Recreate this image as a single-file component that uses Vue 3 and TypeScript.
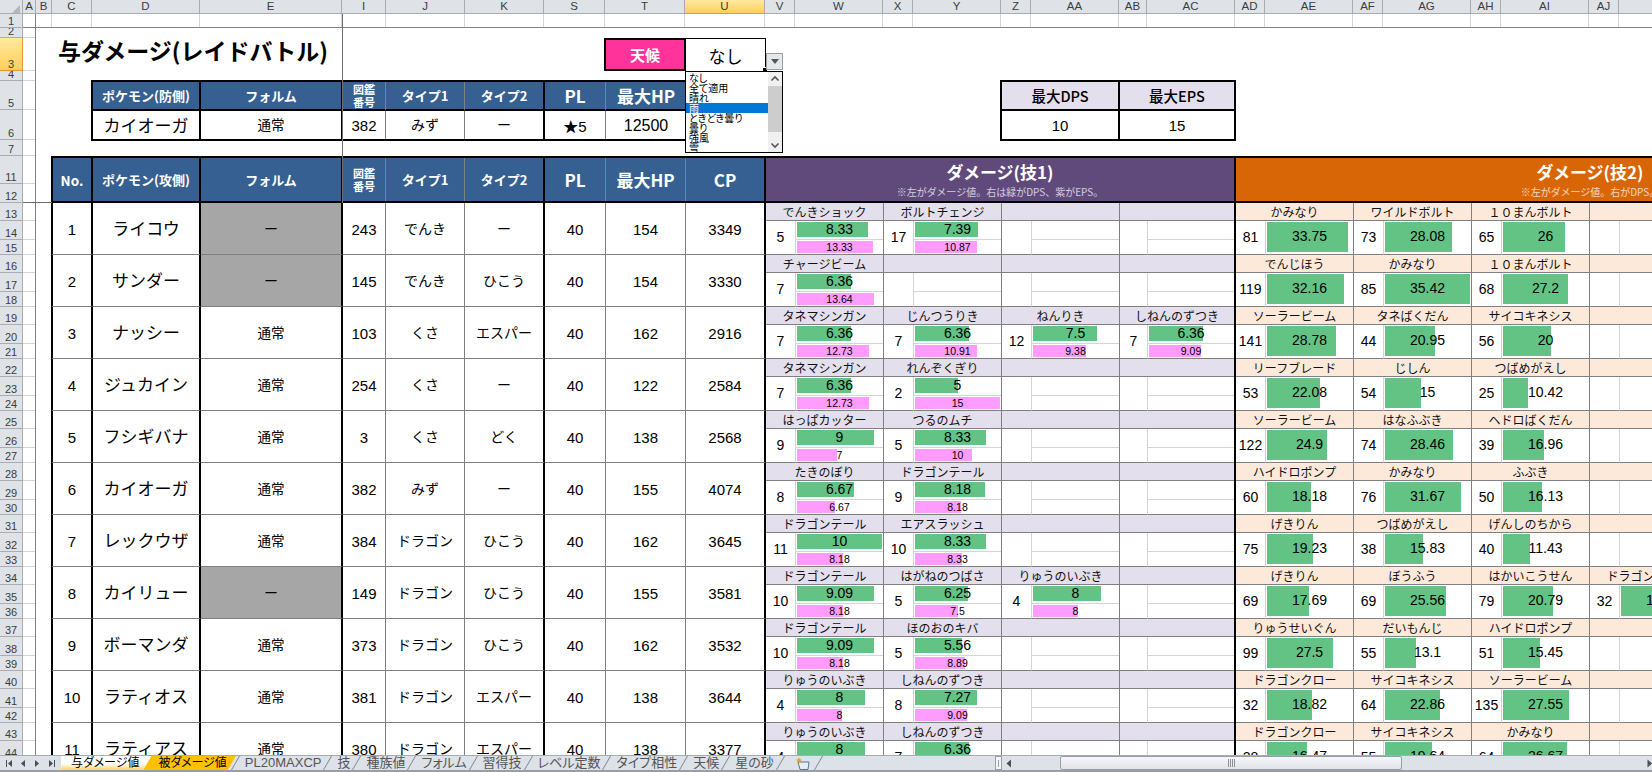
<script setup lang="ts">
interface FastMove {
  name: string
  hit: number
  dps: number
  eps: number
}

interface ChargeMove {
  name: string
  hit: number
  dps: number
}

interface Attacker {
  no: number
  name: string
  form: string
  dex: number
  type1: string
  type2: string
  hp: number
  cp: number
  fast: FastMove[]
  charge: ChargeMove[]
}

const f = (name: string, hit: number, dps: number, eps: number): FastMove => ({ name, hit, dps, eps })
const c = (name: string, hit: number, dps: number): ChargeMove => ({ name, hit, dps })

const attackers: Attacker[] = [
  {
    no: 1, name: 'ライコウ', form: 'ー', dex: 243, type1: 'でんき', type2: 'ー', hp: 154, cp: 3349,
    fast: [f('でんきショック', 5, 8.33, 13.33), f('ボルトチェンジ', 17, 7.39, 10.87)],
    charge: [c('かみなり', 81, 33.75), c('ワイルドボルト', 73, 28.08), c('１０まんボルト', 65, 26)],
  },
  {
    no: 2, name: 'サンダー', form: 'ー', dex: 145, type1: 'でんき', type2: 'ひこう', hp: 154, cp: 3330,
    fast: [f('チャージビーム', 7, 6.36, 13.64)],
    charge: [c('でんじほう', 119, 32.16), c('かみなり', 85, 35.42), c('１０まんボルト', 68, 27.2)],
  },
  {
    no: 3, name: 'ナッシー', form: '通常', dex: 103, type1: 'くさ', type2: 'エスパー', hp: 162, cp: 2916,
    fast: [
      f('タネマシンガン', 7, 6.36, 12.73),
      f('じんつうりき', 7, 6.36, 10.91),
      f('ねんりき', 12, 7.5, 9.38),
      f('しねんのずつき', 7, 6.36, 9.09),
    ],
    charge: [c('ソーラービーム', 141, 28.78), c('タネばくだん', 44, 20.95), c('サイコキネシス', 56, 20)],
  },
  {
    no: 4, name: 'ジュカイン', form: '通常', dex: 254, type1: 'くさ', type2: 'ー', hp: 122, cp: 2584,
    fast: [f('タネマシンガン', 7, 6.36, 12.73), f('れんぞくぎり', 2, 5, 15)],
    charge: [c('リーフブレード', 53, 22.08), c('じしん', 54, 15), c('つばめがえし', 25, 10.42)],
  },
  {
    no: 5, name: 'フシギバナ', form: '通常', dex: 3, type1: 'くさ', type2: 'どく', hp: 138, cp: 2568,
    fast: [f('はっぱカッター', 9, 9, 7), f('つるのムチ', 5, 8.33, 10)],
    charge: [c('ソーラービーム', 122, 24.9), c('はなふぶき', 74, 28.46), c('ヘドロばくだん', 39, 16.96)],
  },
  {
    no: 6, name: 'カイオーガ', form: '通常', dex: 382, type1: 'みず', type2: 'ー', hp: 155, cp: 4074,
    fast: [f('たきのぼり', 8, 6.67, 6.67), f('ドラゴンテール', 9, 8.18, 8.18)],
    charge: [c('ハイドロポンプ', 60, 18.18), c('かみなり', 76, 31.67), c('ふぶき', 50, 16.13)],
  },
  {
    no: 7, name: 'レックウザ', form: '通常', dex: 384, type1: 'ドラゴン', type2: 'ひこう', hp: 162, cp: 3645,
    fast: [f('ドラゴンテール', 11, 10, 8.18), f('エアスラッシュ', 10, 8.33, 8.33)],
    charge: [c('げきりん', 75, 19.23), c('つばめがえし', 38, 15.83), c('げんしのちから', 40, 11.43)],
  },
  {
    no: 8, name: 'カイリュー', form: 'ー', dex: 149, type1: 'ドラゴン', type2: 'ひこう', hp: 155, cp: 3581,
    fast: [f('ドラゴンテール', 10, 9.09, 8.18), f('はがねのつばさ', 5, 6.25, 7.5), f('りゅうのいぶき', 4, 8, 8)],
    charge: [
      c('げきりん', 69, 17.69),
      c('ぼうふう', 69, 25.56),
      c('はかいこうせん', 79, 20.79),
      c('ドラゴンクロー', 32, 18.82),
    ],
  },
  {
    no: 9, name: 'ボーマンダ', form: '通常', dex: 373, type1: 'ドラゴン', type2: 'ひこう', hp: 162, cp: 3532,
    fast: [f('ドラゴンテール', 10, 9.09, 8.18), f('ほのおのキバ', 5, 5.56, 8.89)],
    charge: [c('りゅうせいぐん', 99, 27.5), c('だいもんじ', 55, 13.1), c('ハイドロポンプ', 51, 15.45)],
  },
  {
    no: 10, name: 'ラティオス', form: '通常', dex: 381, type1: 'ドラゴン', type2: 'エスパー', hp: 138, cp: 3644,
    fast: [f('りゅうのいぶき', 4, 8, 8), f('しねんのずつき', 8, 7.27, 9.09)],
    charge: [c('ドラゴンクロー', 32, 18.82), c('サイコキネシス', 64, 22.86), c('ソーラービーム', 135, 27.55)],
  },
  {
    no: 11, name: 'ラティアス', form: '通常', dex: 380, type1: 'ドラゴン', type2: 'エスパー', hp: 138, cp: 3377,
    fast: [f('りゅうのいぶき', 4, 8, 8), f('しねんのずつき', 7, 6.36, 9.09)],
    charge: [c('ドラゴンクロー', 28, 16.47), c('サイコキネシス', 55, 19.64), c('かみなり', 64, 26.67)],
  },
]

const colNames = [
  'A', 'B', 'C', 'D', 'E', 'I', 'J', 'K', 'S', 'T', 'U', 'V', 'W', 'X', 'Y', 'Z',
  'AA', 'AB', 'AC', 'AD', 'AE', 'AF', 'AG', 'AH', 'AI', 'AJ', 'AK',
]

const rowHeads = [
  { no: 1, h: 14 },
  { no: 2, h: 10 },
  { no: 3, h: 33 },
  { no: 4, h: 10 },
  { no: 5, h: 29 },
  { no: 6, h: 30 },
  { no: 7, h: 16 },
  { no: 11, h: 28 },
  { no: 12, h: 19 },
]
const repeat = [18, 19, 15]
for (let no = 13; no <= 46; no++) {
  rowHeads.push({ no, h: repeat[(no - 13) % 3] })
}

const weatherOptions = ['なし', '全て適用', '晴れ', '雨', 'ときどき曇り', '曇り', '強風', '雪']

const tabs = [
  { name: '与ダメージ値', kind: 'active' },
  { name: '被ダメージ値', kind: 'gold' },
  { name: 'PL20MAXCP', kind: '' },
  { name: '技', kind: '' },
  { name: '種族値', kind: '' },
  { name: 'フォルム', kind: '' },
  { name: '習得技', kind: '' },
  { name: 'レベル定数', kind: '' },
  { name: 'タイプ相性', kind: '' },
  { name: '天候', kind: '' },
  { name: '星の砂', kind: '' },
]

// data bars share the cell width (85px) with the column max
const BAR = 85
const barWidth = (value: number, max: number) => `${(value / max) * BAR}px`

const slots = <T,>(list: T[], n: number): (T | null)[] => {
  const out: (T | null)[] = [...list]
  while (out.length < n) out.push(null)
  return out
}
</script>

<template>
  <div class="app">
    <div class="col-bar">
      <div class="corner"><i></i></div>
      <div v-for="col in colNames" :key="col" class="col-cell" :class="{ on: col === 'U' }">{{ col }}</div>
    </div>

    <div class="body">
      <div class="row-bar">
        <div
          v-for="r in rowHeads"
          :key="r.no"
          class="row-cell"
          :class="{ on: r.no === 3 }"
          :style="{ height: r.h + 'px' }"
        >{{ r.no }}</div>
      </div>
      <div class="col-a">
        <div v-for="r in rowHeads" :key="r.no" class="a-cell" :style="{ height: r.h + 'px' }"></div>
      </div>

      <div class="page">
        <div class="row-one">
          <div v-for="col in colNames.slice(1)" :key="col"></div>
        </div>

        <div class="top">
          <h1 class="title">与ダメージ(レイドバトル)</h1>
          <div class="weather-label">天候</div>
          <div class="weather-value">
            なし
            <span class="handle"></span>
            <div class="drop-btn"><i></i></div>
            <div class="listbox">
              <ul>
                <li v-for="w in weatherOptions" :key="w" :class="{ sel: w === '雨' }">{{ w }}</li>
              </ul>
              <div class="list-scroll">
                <svg width="14" height="14" viewBox="0 0 14 14"><path d="M3.5 8.5 7 5l3.5 3.5" fill="none" stroke="#555" stroke-width="1.6" /></svg>
                <div class="list-thumb"></div>
                <svg width="14" height="14" viewBox="0 0 14 14"><path d="M3.5 5.5 7 9l3.5-3.5" fill="none" stroke="#555" stroke-width="1.6" /></svg>
              </div>
            </div>
          </div>

          <div class="def-table">
            <div class="h thick name-h">ポケモン(防側)</div>
            <div class="h thick">フォルム</div>
            <div class="h thin dex-h">図鑑<br />番号</div>
            <div class="h thin">タイプ1</div>
            <div class="h thick">タイプ2</div>
            <div class="h thin big-h">PL</div>
            <div class="h big-h">最大HP</div>
            <div class="d thick name">カイオーガ</div>
            <div class="d thick form">通常</div>
            <div class="d thin num">382</div>
            <div class="d thin type">みず</div>
            <div class="d thick type">ー</div>
            <div class="d thin num">★5</div>
            <div class="d num wide">12500</div>
          </div>

          <div class="max-table">
            <div class="max-h">最大DPS</div>
            <div class="max-h">最大EPS</div>
            <div class="max-v">10</div>
            <div class="max-v">15</div>
          </div>
        </div>

        <div class="sheet-table">
          <div class="t-row t-head">
            <div class="h thick no-h">No.</div>
            <div class="h thick name-h">ポケモン(攻側)</div>
            <div class="h thick">フォルム</div>
            <div class="h thin dex-h">図鑑<br />番号</div>
            <div class="h thin">タイプ1</div>
            <div class="h thick">タイプ2</div>
            <div class="h thin big-h">PL</div>
            <div class="h thin big-h">最大HP</div>
            <div class="h thick big-h">CP</div>
            <div class="band band-fast">
              <strong>ダメージ(技1)</strong>
              <small>※左がダメージ値。右は緑がDPS、紫がEPS。</small>
            </div>
            <div class="band band-charge">
              <strong>ダメージ(技2)</strong>
              <small>※左がダメージ値。右がDPS。</small>
            </div>
          </div>

          <div v-for="a in attackers" :key="a.no" class="t-row">
            <div class="d thick num">{{ a.no }}</div>
            <div class="d thick name">{{ a.name }}</div>
            <div class="d thick form" :class="{ blank: a.form === 'ー' }">{{ a.form }}</div>
            <div class="d thin num">{{ a.dex }}</div>
            <div class="d thin type">{{ a.type1 }}</div>
            <div class="d thick type">{{ a.type2 }}</div>
            <div class="d thin num">40</div>
            <div class="d thin num">{{ a.hp }}</div>
            <div class="d thick num">{{ a.cp }}</div>

            <div class="moves fast">
              <div v-for="(m, i) in slots(a.fast, 4)" :key="i" class="move" :class="{ narrow: i === 3 }">
                <div class="m-name">{{ m?.name }}</div>
                <div class="m-hit">{{ m?.hit }}</div>
                <div class="m-vals">
                  <div class="val val-dps">
                    <span v-if="m" class="bar green" :style="{ width: barWidth(m.dps, 10) }"></span>
                    <b>{{ m?.dps }}</b>
                  </div>
                  <div class="val val-eps">
                    <span v-if="m" class="bar pink" :style="{ width: barWidth(m.eps, 15) }"></span>
                    <b>{{ m?.eps }}</b>
                  </div>
                </div>
              </div>
            </div>

            <div class="moves charge">
              <div v-for="(m, i) in slots(a.charge, 6)" :key="i" class="move">
                <div class="m-name">{{ m?.name }}</div>
                <div class="m-hit">{{ m?.hit }}</div>
                <div class="m-vals">
                  <div class="val val-full">
                    <span v-if="m" class="bar green" :style="{ width: barWidth(m.dps, 35.42) }"></span>
                    <b>{{ m?.dps }}</b>
                  </div>
                </div>
              </div>
            </div>
          </div>
        </div>
      </div>

      <div class="freeze-v"></div>
      <div class="freeze-h"></div>
    </div>

    <div class="tabbar">
      <div class="tab-nav">
        <svg width="58" height="15" viewBox="0 0 58 15" fill="#4a4f55">
          <path d="M6 4h1v7H6zM12 4v7L8 7.5z" />
          <path d="M25 4v7l-4-3.500z" />
          <path d="M35 4v7l4-3.500z" />
          <path d="M49 4v7l4-3.500zM54 4h1v7h-1z" />
        </svg>
      </div>
      <div v-for="t in tabs" :key="t.name" class="tab" :class="t.kind">{{ t.name }}</div>
      <div class="tab new-tab">
        <svg width="16" height="14" viewBox="0 0 16 14">
          <path d="M3 5h11l-1 7.500H5z" fill="#e8eef6" stroke="#5b7693" />
          <path d="M4 .5l.9 1.800 2 .3-1.400 1.400.3 2L4 5.100 2.200 6l.3-2L1 2.600l2-.3z" fill="#f0a020" />
        </svg>
      </div>
      <div class="tab-gap"></div>
      <div class="split"><i></i></div>
      <div class="hscroll">
        <svg class="arrow" width="8" height="15" viewBox="0 0 8 15"><path d="M6 3.500v8L1.500 7.500z" fill="#4a4f55" /></svg>
        <div class="thumb"><i></i></div>
        <svg class="arrow" width="6" height="15" viewBox="0 0 6 15"><path d="M1.500 3.500v8L6 7.500z" fill="#4a4f55" /></svg>
      </div>
    </div>
  </div>
</template>

<style scoped>
.app {
  --sans: "Liberation Sans", "Noto Sans CJK JP", sans-serif;
  --jp: "Noto Sans CJK JP", "Liberation Sans", sans-serif;
  --head: #dfe3e8;
  --line: #d4d4d4;
  --grid: #808080;
  width: 1652px;
  height: 772px;
  display: flex;
  flex-direction: column;
  overflow: hidden;
  background: #fff;
  font-family: var(--sans);
  color: #000;
}

/* column letters */
.col-bar {
  flex: none;
  height: 14px;
  display: grid;
  grid-template-columns:
    23px 13px 16px 40px 108px 142px 44px 79px 79px 61px 80px 80px
    30px 88px 30px 88px 30px 88px 28px 88px
    30px 88px 30px 88px 30px 88px 30px 88px;
  background: var(--head);
  border-bottom: 1px solid #a9adb3;
  box-sizing: border-box;
}
.corner {
  display: flex;
  align-items: flex-end;
  justify-content: flex-end;
  padding: 0 2px 1px 0;
  border-right: 1px solid #a9adb3;
}
.corner i {
  width: 0;
  height: 0;
  border-left: 8px solid transparent;
  border-bottom: 8px solid #b3b8bd;
}
.col-cell {
  border-right: 1px solid #a9adb3;
  font-size: 11.5px;
  line-height: 13px;
  text-align: center;
  color: #3c3c3c;
  overflow: hidden;
}
.col-cell.on {
  background: linear-gradient(#ffe9a0, #ffcf58);
  border-bottom: 1px solid #e69a2e;
  height: 14px;
  box-sizing: border-box;
}

.body {
  position: relative;
  flex: 1;
  min-height: 0;
  display: flex;
  overflow: hidden;
}

/* row numbers */
.row-bar {
  flex: none;
  width: 23px;
  background: var(--head);
}
.row-cell {
  box-sizing: border-box;
  border-right: 1px solid #a9adb3;
  border-bottom: 1px solid #a9adb3;
  display: flex;
  align-items: flex-end;
  justify-content: center;
  font-size: 11px;
  line-height: 11px;
  color: #3c3c3c;
  overflow: hidden;
}
.row-cell.on {
  background: linear-gradient(#ffe9a0, #ffcf58);
  border-right-color: #e69a2e;
  border-bottom-color: #e69a2e;
}

.col-a {
  flex: none;
  width: 13px;
  border-right: 1px solid var(--grid);
  box-sizing: border-box;
}
.a-cell {
  box-sizing: border-box;
  border-bottom: 1px solid var(--line);
}
.a-cell:first-child {
  border-bottom-color: var(--grid);
}

.page {
  flex: none;
  width: 1616px;
  overflow: hidden;
}

.row-one {
  height: 14px;
  box-sizing: border-box;
  display: grid;
  grid-template-columns:
    16px 40px 108px 142px 44px 79px 79px 61px 80px 80px
    30px 88px 30px 88px 30px 88px 28px 88px
    30px 88px 30px 88px 30px 88px 30px 88px;
  border-bottom: 1px solid var(--grid);
}
.row-one > div {
  border-right: 1px solid var(--line);
}

/* title, weather picker and the two small tables */
.top {
  height: 128px;
  display: grid;
  grid-template-columns: 55px 513px 82px 80px 234px 236px;
  grid-template-rows: 10px 33px 9px 61px;
}
.title {
  grid-column: 1 / 3;
  grid-row: 2;
  margin: 0 0 0 22px;
  padding-bottom: 9px;
  display: flex;
  align-items: center;
  font-size: 23px;
  font-weight: 700;
  font-family: var(--jp);
  white-space: nowrap;
}
.weather-label {
  grid-column: 3;
  grid-row: 2;
  box-sizing: border-box;
  border: 2px solid #000;
  background: #ff3399;
  color: #fff;
  font-family: var(--jp);
  font-weight: 700;
  font-size: 15px;
  display: flex;
  align-items: center;
  justify-content: center;
}
.weather-value {
  grid-column: 4;
  grid-row: 2;
  position: relative;
  box-sizing: border-box;
  border-top: 1px solid #000;
  border-right: 1px solid #000;
  display: flex;
  align-items: center;
  justify-content: center;
  font-family: var(--jp);
  font-size: 17px;
}
.handle {
  position: absolute;
  right: -3px;
  bottom: -2px;
  width: 4px;
  height: 4px;
  background: #000;
  border: 1px solid #fff;
}
.drop-btn {
  position: absolute;
  left: 80px;
  top: 14px;
  width: 17px;
  height: 17px;
  box-sizing: border-box;
  border: 1px solid #9aa0a6;
  background: #e4e7eb;
  display: flex;
  align-items: center;
  justify-content: center;
}
.drop-btn i {
  width: 0;
  height: 0;
  border-left: 4px solid transparent;
  border-right: 4px solid transparent;
  border-top: 5px solid #555;
}
.listbox {
  position: absolute;
  left: -1px;
  top: 32px;
  width: 98px;
  height: 82px;
  box-sizing: border-box;
  border: 1px solid #000;
  background: #fff;
  display: flex;
  z-index: 5;
  overflow: hidden;
}
.listbox ul {
  flex: 1;
  margin: 0;
  padding: 1px 0 0;
  list-style: none;
  font-size: 10px;
  font-feature-settings: "palt";
  color: #000;
}
.listbox li {
  height: 10px;
  line-height: 10px;
  padding-left: 3px;
  white-space: nowrap;
}
.listbox li.sel {
  background: #0078d7;
  color: #fff;
}
.list-scroll {
  flex: none;
  width: 14px;
  display: flex;
  flex-direction: column;
  background: #f0f0f0;
}
.list-scroll svg {
  flex: none;
}
.list-thumb {
  height: 46px;
  margin: 0 0 auto;
  background: #cdcdcd;
}

.def-table {
  grid-column: 2 / 4;
  grid-row: 4;
  display: grid;
  grid-template-columns: 110px 142px 43px 79px 80px 61px 80px;
  grid-template-rows: 29px 28px;
  box-sizing: border-box;
  border: solid #000;
  border-width: 2px 0 2px 0;
}
.def-table > :first-child,
.def-table > :nth-child(8) {
  border-left: 2px solid #000;
}
.def-table > .h {
  border-bottom: 2px solid #000;
}
.max-table {
  grid-column: 6;
  grid-row: 4;
  display: grid;
  grid-template-columns: 118px 114px;
  grid-template-rows: 29px 28px;
  box-sizing: border-box;
  border: 2px solid #000;
}
.max-h,
.max-v {
  display: flex;
  align-items: center;
  justify-content: center;
}
.max-h {
  background: #e4dfec;
  border-bottom: 2px solid #000;
  font-family: var(--jp);
  font-weight: 500;
  font-size: 14.5px;
}
.max-v {
  font-size: 15px;
}
.max-h:nth-child(odd),
.max-v:nth-child(odd) {
  border-right: 2px solid #000;
}

/* main table */
.sheet-table {
  margin-left: 15px;
  width: 1893px;
}
.t-row {
  display: grid;
  grid-template-columns: 42px 108px 142px 43px 79px 80px 61px 80px 80px 470px 708px;
  height: 52px;
  box-sizing: border-box;
}
.t-head {
  height: 47px;
  border-top: 2px solid #000;
  border-bottom: 2px solid #000;
}
.t-row > :first-child {
  border-left: 2px solid #000;
}

.h,
.d {
  display: flex;
  align-items: center;
  justify-content: center;
  box-sizing: border-box;
  text-align: center;
  white-space: nowrap;
}
.h {
  background: #366092;
  color: #fff;
  font-family: var(--jp);
  font-weight: 700;
  font-size: 13px;
}
.d {
  background: #fff;
}
.t-row > .d {
  border-bottom: 1px solid var(--grid);
}
.thick {
  border-right: 2px solid #000;
}
.thin {
  border-right: 1px solid var(--grid);
}
.no-h {
  font-size: 13.5px;
}
.dex-h {
  font-size: 11px;
  line-height: 13px;
}
.big-h {
  font-size: 17px;
}
.name {
  font-family: var(--jp);
  font-size: 17px;
  padding-bottom: 2px;
}
.form {
  font-family: var(--jp);
  font-size: 13.5px;
  padding-bottom: 2px;
}
.form.blank {
  background: #a6a6a6;
  font-size: 14px;
}
.type {
  font-family: var(--jp);
  font-size: 14px;
  padding-bottom: 2px;
}
.num {
  font-size: 15px;
  padding-top: 1px;
}
.wide {
  font-size: 16px;
}

.band {
  box-sizing: border-box;
  color: #fff;
  font-family: var(--jp);
  display: flex;
  flex-direction: column;
  align-items: center;
  white-space: nowrap;
}
.band strong {
  font-size: 17px;
  line-height: 26px;
  margin-top: 1px;
}
.band small {
  font-size: 10px;
  line-height: 14px;
  opacity: 0.72;
}
.band-fast {
  background: #604a7b;
  border-right: 2px solid #000;
}
.band-charge {
  background: #d86607;
}

/* move blocks */
.moves {
  display: grid;
  box-sizing: border-box;
}
.fast {
  grid-template-columns: 118px 118px 118px 114px;
  border-right: 2px solid #000;
}
.charge {
  grid-template-columns: 118px 118px 118px 118px 118px 118px;
}
.move {
  display: grid;
  grid-template-columns: 30px 1fr;
  grid-template-rows: 18px 34px;
  box-sizing: border-box;
  border-right: 1px solid var(--grid);
  min-width: 0;
}
.move.narrow {
  grid-template-columns: 28px 1fr;
  border-right: 0;
}
.m-name {
  grid-column: 1 / 3;
  box-sizing: border-box;
  border-bottom: 1px solid var(--grid);
  font-family: var(--jp);
  font-size: 12px;
  line-height: 17px;
  text-align: center;
  white-space: nowrap;
  overflow: hidden;
  color: #111;
}
.fast .m-name {
  background: #e4dfec;
}
.charge .m-name {
  background: #fde9d9;
}
.m-hit {
  box-sizing: border-box;
  border-right: 1px solid var(--line);
  border-bottom: 1px solid var(--grid);
  display: flex;
  align-items: center;
  justify-content: center;
  font-size: 14px;
  padding-bottom: 1px;
}
.m-vals {
  display: flex;
  flex-direction: column;
  box-sizing: border-box;
  border-bottom: 1px solid var(--grid);
  min-width: 0;
}
.val {
  position: relative;
  text-align: center;
}
.val b {
  position: relative;
  font-weight: 400;
}
.val-dps {
  height: 19px;
  box-sizing: border-box;
  border-bottom: 1px solid var(--line);
  font-size: 14px;
  line-height: 17px;
}
.val-eps {
  flex: 1;
  font-size: 10.5px;
  line-height: 13px;
  padding-top: 1px;
}
.val-full {
  flex: 1;
  font-size: 14px;
  line-height: 31px;
}
.bar {
  position: absolute;
  left: 1px;
  top: 1px;
}
.green {
  background: #63c384;
}
.pink {
  background: #ff9cff;
}
.val-dps .bar {
  height: 15px;
}
.val-eps .bar {
  height: 11.5px;
}
.val-full .bar {
  height: 30px;
}

/* freeze pane lines */
.freeze-v {
  position: absolute;
  left: 342px;
  top: 0;
  width: 1px;
  height: 189px;
  background: #6e6e6e;
}
.freeze-h {
  position: absolute;
  left: 23px;
  top: 188px;
  width: 29px;
  height: 1px;
  background: #6e6e6e;
}

/* sheet tabs and horizontal scrollbar */
.tabbar {
  flex: none;
  height: 17px;
  box-sizing: border-box;
  display: flex;
  background: #dde1e8;
  border-top: 1px solid #a7acb2;
  border-bottom: 2px solid #9a9ea4;
  font-family: var(--sans);
  font-size: 13px;
  font-feature-settings: "palt";
  color: #555;
  overflow: hidden;
}
.tab-nav {
  flex: none;
  width: 61px;
}
.tab-nav svg {
  display: block;
}
.tab {
  position: relative;
  flex: none;
  padding: 0 7px 0 13px;
  margin-left: -4px;
  line-height: 14px;
  white-space: nowrap;
}
.tab::before {
  content: "";
  position: absolute;
  left: 3px;
  top: 0;
  bottom: 0;
  width: 1px;
  background: #7c8794;
  transform: skewX(-30deg);
}
.tab.active,
.tab.gold {
  color: #000;
  font-size: 12px;
  clip-path: polygon(8px 0, 100% 0, calc(100% - 8px) 100%, 0 100%);
}
.tab.active {
  margin-left: 0;
  padding: 0 12px 0 10px;
  background: linear-gradient(#fff 55%, #ffd35c);
  clip-path: polygon(0 0, 100% 0, calc(100% - 8px) 100%, 0 100%);
}
.tab.gold {
  margin-left: -8px;
  padding: 0 9px 0 15px;
  background: #ffc000;
}
.tab.active::before,
.tab.gold::before {
  display: none;
}
.new-tab {
  width: 46px;
  box-sizing: border-box;
  padding: 1px 0 0 18px;
}
.new-tab svg {
  display: block;
}
.new-tab::after {
  content: "";
  position: absolute;
  right: 4px;
  top: 0;
  bottom: 0;
  width: 1px;
  background: #7c8794;
  transform: skewX(-30deg);
}
.tab-gap {
  flex: 1;
}
.split {
  flex: none;
  width: 7px;
  box-sizing: border-box;
  border: 1px solid #9a9ea4;
  background: #f4f5f7;
  display: flex;
  align-items: center;
  justify-content: center;
}
.split i {
  width: 1px;
  height: 7px;
  background: #9a9ea4;
}
.hscroll {
  flex: none;
  width: 650px;
  display: flex;
  align-items: stretch;
}
.arrow {
  flex: none;
  margin-left: 3px;
}
.thumb {
  flex: none;
  width: 342px;
  margin-left: 47px;
  box-sizing: border-box;
  border: 1px solid #9a9ea4;
  border-radius: 2px;
  background: linear-gradient(#f6f7f9, #dfe2e8);
  display: flex;
  align-items: center;
  justify-content: center;
}
.thumb i {
  width: 7px;
  height: 8px;
  background: repeating-linear-gradient(90deg, #8d9196 0 1px, transparent 1px 2px);
}
.hscroll .arrow:last-child {
  margin-left: auto;
}
</style>

<style>
html,
body {
  margin: 0;
  overflow: hidden;
}
</style>
